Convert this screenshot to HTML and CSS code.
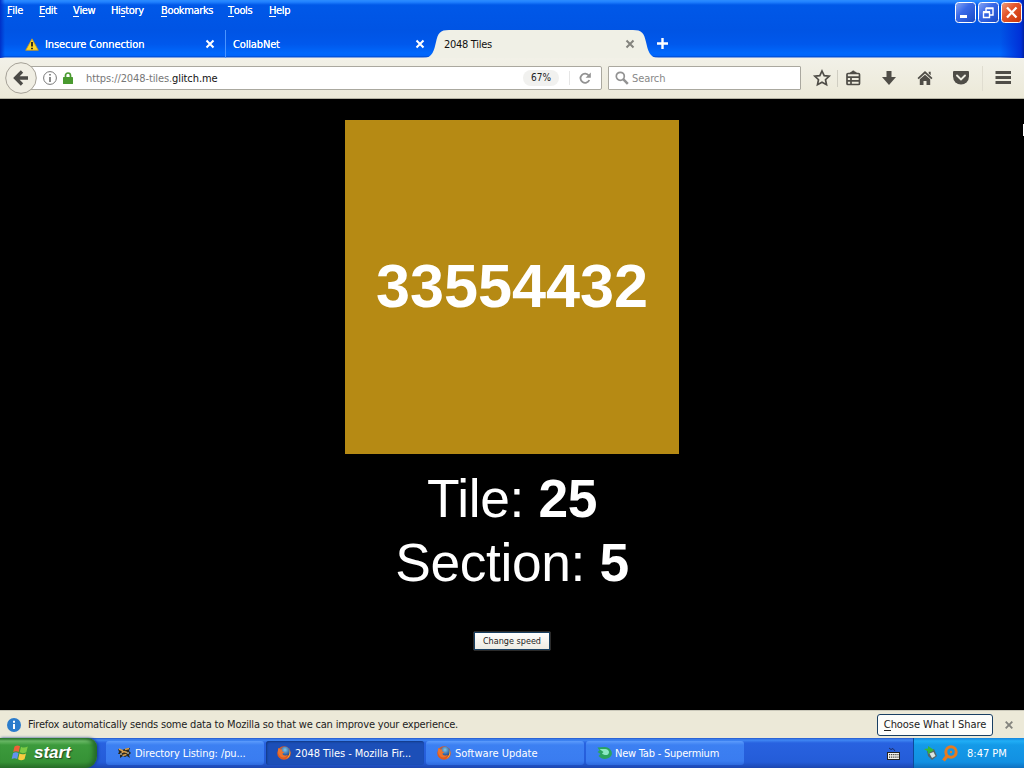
FILE: index.html
```html
<!DOCTYPE html>
<html lang="en">
<head>
<meta charset="utf-8">
<title>2048 Tiles</title>
<link rel="stylesheet" href="styles.css">
</head>
<body>
<div class="screen">
  <header class="titlebar">
    <nav class="menu">
      <span class="m-file"><u>F</u>ile</span><span class="m-edit"><u>E</u>dit</span><span class="m-view"><u>V</u>iew</span><span class="m-history">Hi<u>s</u>tory</span><span class="m-book"><u>B</u>ookmarks</span><span class="m-tools"><u>T</u>ools</span><span><u>H</u>elp</span>
    </nav>
    <div class="winbtns">
      <svg width="68" height="22" viewBox="0 0 68 22">
        <defs>
          <linearGradient id="wb" x1="0" y1="0" x2="1" y2="1"><stop offset="0" stop-color="#8aa8f4"/><stop offset=".4" stop-color="#3a6ae8"/><stop offset="1" stop-color="#1648c4"/></linearGradient>
          <linearGradient id="wr" x1="0" y1="0" x2="1" y2="1"><stop offset="0" stop-color="#f0a080"/><stop offset=".4" stop-color="#e4562c"/><stop offset="1" stop-color="#c83408"/></linearGradient>
        </defs>
        <g stroke="#fff"><rect x=".5" y=".5" width="20" height="20" rx="3" fill="url(#wb)"/><rect x="23.500" y=".5" width="20" height="20" rx="3" fill="url(#wb)"/><rect x="46.500" y=".5" width="20" height="20" rx="3" fill="url(#wr)"/></g>
        <path d="M5 13h7v3H5z" fill="#fff"/>
        <path d="M31 9V6.500h7V13h-3M28.500 10.500h6v5h-6zM28 9.800h7M31 6h7.500" fill="none" stroke="#fff" stroke-width="1.400"/>
        <path d="M52 5.500l9.500 10M61.500 5.500l-9.500 10" stroke="#fff" stroke-width="2.300"/>
      </svg>
    </div>
    <div class="tabs">
      <div class="tab first">
        <svg width="14" height="13" viewBox="0 0 14 13"><path d="M7 .8L13.300 12.300H.7z" fill="#fbd52c" stroke="#c89520" stroke-width=".8" stroke-linejoin="round"/><path d="M7 4v4.500M7 9.700v1.500" stroke="#222" stroke-width="1.800"/></svg>
        <span class="tab-name t-ins">Insecure Connection</span>
        <svg class="x" width="8" height="8" viewBox="0 0 8 8"><path d="M.5.5l7 7M7.500.5l-7 7" stroke="#fff" stroke-width="2"/></svg>
      </div>
      <div class="tab second">
        <span class="tab-name t-col">CollabNet</span>
        <svg class="x" width="8" height="8" viewBox="0 0 8 8"><path d="M.5.5l7 7M7.500.5l-7 7" stroke="#fff" stroke-width="2"/></svg>
      </div>
      <div class="tab active">
        <svg class="tab-shape" width="236" height="28" viewBox="0 0 236 28"><path d="M0 28C10 28 11 20 13 12C15 3 17 0 26 0H210C219 0 221 3 223 12C225 20 226 28 236 28z" fill="#f0f0e6"/></svg>
        <span class="tab-name t-2048">2048 Tiles</span>
        <svg class="x" width="8" height="8" viewBox="0 0 8 8"><path d="M.5.5l7 7M7.500.5l-7 7" stroke="#84847e" stroke-width="2"/></svg>
      </div>
      <svg class="plus" width="11" height="11" viewBox="0 0 11 11"><path d="M5.500 0v11M0 5.500h11" stroke="#fff" stroke-width="2.400"/></svg>
    </div>
  </header>

  <div class="toolbar">
    <div class="back"><svg width="32" height="32" viewBox="0 0 32 32"><circle cx="16" cy="16" r="15.300" fill="#f0eee3" stroke="#a5a197"/><path d="M17 9.500L10.500 16l6.500 6.500M11.500 16H23" fill="none" stroke="#4b4a46" stroke-width="3.300"/></svg></div>
    <div class="urlbar">
      <svg class="info" width="14" height="14" viewBox="0 0 14 14"><circle cx="7" cy="7" r="6.400" fill="none" stroke="#777"/><path d="M7 6v5M7 3v1.600" stroke="#666" stroke-width="1.500"/></svg>
      <svg class="lock" width="10" height="12" viewBox="0 0 10 12"><path d="M2.500 6V3.500a2.500 2.500 0 015 0V6" fill="none" stroke="#4a9a30" stroke-width="1.700"/><rect y="5" width="10" height="7" rx=".6" fill="#4a9a30"/></svg>
      <span class="url">https://2048-tiles.<b>glitch.me</b></span>
      <span class="zoom">67%</span>
      <i class="urlsep"></i>
      <svg class="reload" width="12" height="12" viewBox="0 0 12 12"><path d="M9.800 3.500A4.600 4.600 0 1010.300 8" fill="none" stroke="#929292" stroke-width="1.800"/><path d="M11.800.5v5.200H6.600z" fill="#929292"/></svg>
    </div>
    <div class="search">
      <svg width="14" height="14" viewBox="0 0 14 14"><circle cx="5.300" cy="5.300" r="4" fill="none" stroke="#929292" stroke-width="1.700"/><path d="M8.200 8.200l4.600 4.600" stroke="#929292" stroke-width="2.500"/></svg>
      <span>Search</span>
    </div>
    <svg class="icons" width="214" height="40" viewBox="810 58 214 40" fill="#4f4d47">
      <path d="M822 71l2.200 4.600 5 .6-3.700 3.500 1 5-4.500-2.500-4.500 2.500 1-5-3.700-3.500 5-.6z" fill="none" stroke="#4f4d47" stroke-width="1.700"/>
      <path d="M837.500 70v17" stroke="#d0cec2"/>
      <path d="M848 73.500h10.500a1 1 0 011 1v9a1 1 0 01-1 1H848a1 1 0 01-1-1v-9a1 1 0 011-1zM847 77.200h12M847 80.800h12M851 77v7" fill="none" stroke="#4f4d47" stroke-width="1.700"/><path d="M849.500 73l2-1.500h.4a1.500 1.500 0 012.800 0h.4l2 1.500z"/>
      <path d="M886.500 71h5v6h4.500l-7 8-7-8h4.500z"/>
      <path d="M925 71l7.500 7-1.200 1.300L925 73.600l-6.300 5.700-1.200-1.300zM928.700 71.700h2v3.500l-2-1.800zM919.800 79.300l5.200-4.600 5.200 4.600V85h-3.700v-4h-3v4h-3.700z"/>
      <path d="M954 71h14a1 1 0 011 1v4.500a8 8 0 01-16 0V72a1 1 0 011-1z"/><path d="M957 75.500l4 4 4-4" fill="none" stroke="#eeede2" stroke-width="1.900" stroke-linecap="round"/>
      <path d="M982.500 66v25" stroke="#e0ddd0"/>
      <path d="M995.500 71h15.500v3h-15.500zM995.500 76h15.500v3h-15.500zM995.500 81h15.500v3h-15.500z"/>
    </svg>
  </div>

  <main class="page">
    <div class="tile">33554432</div>
    <div class="caption">Tile: <b>25</b></div>
    <div class="caption">Section: <b>5</b></div>
    <button class="speed"><span>Change speed</span></button>
    <i class="caret"></i>
  </main>

  <div class="notice">
    <svg width="14" height="14" viewBox="0 0 14 14"><circle cx="7" cy="7" r="7" fill="#2b7ccc"/><path d="M7 6v5M7 2.800v2" stroke="#fff" stroke-width="2"/></svg>
    <span class="msg">Firefox automatically sends some data to Mozilla so that we can improve your experience.</span>
    <button class="choose"><span><u>C</u>hoose What I Share</span></button>
    <svg class="close" width="8" height="8" viewBox="0 0 8 8"><path d="M.7.7l6.600 6.600M7.300.7L.7 7.300" stroke="#84847e" stroke-width="1.900"/></svg>
  </div>

  <footer class="taskbar">
    <svg width="0" height="0" class="defs"><defs>
      <radialGradient id="fb" cx=".5" cy=".3" r=".6"><stop offset="0" stop-color="#7cc8ee"/><stop offset="1" stop-color="#1d4a94"/></radialGradient>
      <symbol id="ff" viewBox="0 0 14 14"><circle cx="7" cy="7" r="6.800" fill="#e05a1e"/><circle cx="8" cy="5.800" r="5" fill="url(#fb)"/><path d="M1.500 2l2 1.500 2-.3-.5 2 2.500 1-2 1.300c0 2 3 2.700 5.500 1.200C9.500 12 4 12.500 2 9 .6 6.500.8 4 1.500 2z" fill="#ea7430"/><path d="M12.500 3.500c1.800 4 .2 8-3.500 9.500 2.500-2 4-5 3.500-9.500z" fill="#f6b83c"/></symbol>
    </defs></svg>
    <div class="start">
      <svg width="17" height="18" viewBox="0 0 17 18"><path d="M2.500 2.500Q5.500.5 8 2.300L6.700 8Q4 6.300 1.200 8z" fill="#ee6038"/><path d="M9 2.700q3 1.800 6.800-.2L14.300 8.200Q10.500 10 7.700 8.300z" fill="#7cca44"/><path d="M1 9.200q3-1.700 5.500 0L5.200 15Q2.500 13.300-.3 15z" fill="#6292ee"/><path d="M7.400 9.500q3 1.700 6.600-.1l-1.500 5.900Q9 17.200 6.100 15.300z" fill="#f8cc40"/></svg>
      <span>start</span>
    </div>
    <div class="tasks">
      <div class="task"><svg width="15" height="14" viewBox="0 0 15 14"><path d="M1 3l4 1 3-1 5-1-1 3 2 2-2 2 1 3-3-2-2 1-2-1-3 2 0-4-2 0 1-2z" fill="#292820"/><path d="M2 3l4 2M8 3.500l4-1M4.500 6.500l2.500-1 3 1M5.500 9.500l4-1" stroke="#d8a04c" stroke-width="1.400" fill="none"/><path d="M3 8h2M10 7h2" stroke="#e4e2d0"/></svg><span class="k1">Directory Listing: /pu...</span></div>
      <div class="task on"><svg width="14" height="14"><use href="#ff"/></svg><span class="k2">2048 Tiles - Mozilla Fir...</span></div>
      <div class="task"><svg width="14" height="14"><use href="#ff"/></svg><span class="k3">Software Update</span></div>
      <div class="task"><svg width="15" height="14" viewBox="0 0 15 14"><path d="M.5 1.500L8 1c7 .5 9 8 4.500 10.500-4 2.500-8 1.500-11-1.500l2-2L.5 6l2-1.500z" fill="#2aa45e"/><path d="M2.500 3h6c3.500.5 4.500 3.500 2.500 5.500-2 1-4.500.5-6-1L6.500 6z" fill="#8ae8c4"/></svg><span class="k4">New Tab - Supermium</span></div>
    </div>
    <svg class="kbd" width="14" height="12" viewBox="0 0 14 12"><path d="M2 0l2 1.500 2-1L8 3" stroke="#1b2d66" fill="none"/><rect x=".5" y="4.500" width="12" height="7" fill="#f4f3ee" stroke="#222"/><path d="M2 6.700h9.500M2 9.200h9.500" stroke="#333" stroke-width="1.200" stroke-dasharray="1.200 .9"/></svg>
    <div class="tray">
      <svg width="14" height="16" viewBox="0 0 14 16"><path d="M3 6l7-2 3 7-5 4-4-4z" fill="#56666a"/><path d="M5.500 8.500l4-1.500 2 4-3.500 2z" fill="#dce5e2"/><path d="M0 4l4-.5V1l6 4-6 4V6.500z" fill="#35b63b"/></svg>
      <svg class="key" width="16" height="17" viewBox="0 0 16 17"><circle cx="9" cy="7" r="5.200" fill="none" stroke="#e57b20" stroke-width="3"/><circle cx="9" cy="7" r="1.200" fill="#e57b20"/><path d="M5.500 10.500L1.500 15.500" stroke="#e57b20" stroke-width="3.500"/></svg>
      <span>8:47 PM</span>
    </div>
  </footer>
</div>
</body>
</html>
```
FILE: styles.css
```css
* { box-sizing: border-box; }
body { margin: 0; background: #000; font: 11px/14px "DejaVu Sans Condensed", "DejaVu Sans", sans-serif; font-stretch: condensed; color: #222; }
svg { display: block; flex: none; overflow: visible; }
span { white-space: nowrap; }
u { text-decoration: none; box-shadow: 0 -1px 0 currentColor inset; display: inline-block; height: 13px; line-height: 14px; }
button { font: inherit; color: inherit; padding: 0; }
.screen { width: 1024px; height: 768px; display: flex; flex-direction: column; overflow: hidden; }

.titlebar { height: 58px; flex: none; position: relative; color: #fff; display: flex; flex-direction: column; justify-content: space-between;
  background: linear-gradient(90deg, #0030c8 0, transparent 5px, transparent 1000px, #0030d8 1021px, #0020a0 1024px), linear-gradient(#2c8cff 0, #2080ff 2px, #0058e8 5px, #0054e4 30px, #0058ec 44px, #0068fc 53px, #0064fa 56px, #0044c0 57px, #fff 58px); }
.menu { display: flex; padding: 4px 0 0 7px; height: 20px; letter-spacing: -.35px; text-shadow: 0 0 .5px #fff; }
.menu span { width: 39px; }
.menu .m-file { width: 32px; }
.menu .m-edit { width: 34px; }
.menu .m-view { width: 38px; }
.menu .m-history { width: 50px; }
.menu .m-book { width: 67px; }
.menu .m-tools { width: 41px; }
.winbtns { position: absolute; right: 1px; top: 2px; }
.tabs { display: flex; height: 28px; }
.tab { display: flex; align-items: center; height: 28px; }
.tab-name { flex: 1; padding-top: 1px; }
.t-ins { letter-spacing: -.1px; }
.t-col { letter-spacing: -.15px; }
.t-2048 { letter-spacing: -.3px; }
.first { width: 225px; padding: 0 11px 0 25px; gap: 6px; text-shadow: 0 0 .5px #fff; }
.second { width: 201px; padding: 0 2px 0 7px; border-left: 1px solid #4a94ff; text-shadow: 0 0 .5px #fff; }
.active { width: 236px; margin-left: -3px; position: relative; padding: 0 25px 0 21px; color: #111; }
.tab-shape { position: absolute; left: 0; top: 0; }
.active .tab-name, .active .x { position: relative; }
.plus { margin: 8px 0 0 -2px; }

.toolbar { height: 41px; flex: none; display: flex; align-items: center; padding-left: 5px; background: linear-gradient(#f2f1e8, #ece9d8); border-bottom: 1px solid #b4b2a4; }
.back { width: 32px; position: relative; z-index: 1; }
.urlbar { width: 573px; height: 24px; margin-left: -8px; border: 1px solid #aaa89f; background: #fff; display: flex; align-items: center; border-radius: 0 2px 2px 0; padding: 0 10px 0 13px; }
.lock { margin: 0 13px 0 6px; }
.url { flex: 1; color: #777; letter-spacing: -.1px; padding-top: 1px; }
.url b { font-weight: 400; color: #111; }
.zoom { width: 36px; height: 16px; line-height: 16px; text-align: center; border-radius: 8px; background: #f1f1ef; font-size: 10px; color: #222; }
.urlsep { width: 1px; height: 14px; background: #e6e6e6; margin: 0 9px 0 10px; }
.search { width: 193px; height: 24px; margin-left: 6px; border: 1px solid #aaa89f; border-radius: 1px; background: #fff; display: flex; align-items: center; gap: 3px; padding-left: 6px; color: #888; }
.search span { padding-top: 1px; letter-spacing: -.1px; }
.icons { margin-left: 9px; }

.page { flex: 1; background: #000; position: relative; display: flex; flex-direction: column; align-items: center; padding-top: 21px; font-family: "Liberation Sans", sans-serif; color: #fff; }
.tile { width: 334px; height: 334px; background: #b68a14; font-size: 61.200px; font-weight: bold; line-height: 332px; text-align: center; margin-bottom: 13px; }
.caption { font-size: 53.330px; letter-spacing: -.35px; line-height: 64px; height: 64px; white-space: nowrap; }
.speed { width: 76px; height: 18px; margin-top: 37px; border: 1px solid #173f62; box-shadow: 0 0 1px #fff; background: linear-gradient(#fff, #eceae2); color: #222; font: 9px/14px "DejaVu Sans Condensed", sans-serif; }
.caret { position: absolute; right: 0; top: 25px; width: 1px; height: 12px; background: #fff; }

.notice { height: 28px; flex: none; background: #ece9d8; border-top: 1px solid #c9c7b9; display: flex; align-items: center; padding: 0 11px 0 7px; }
.msg { flex: 1; margin-left: 7px; letter-spacing: -.195px; }
.choose { width: 116px; height: 22px; background: #fdfdfb; border: 1px solid #193f64; border-radius: 3px; margin-right: 12px; letter-spacing: -.05px; }

.taskbar { height: 30px; flex: none; display: flex; align-items: stretch; color: #fff; background: linear-gradient(#2458cc 0, #4088f4 2px, #2862e0 5px, #245cd8 24px, #1c46b0 30px); }
.defs { position: absolute; }
.start { width: 97px; display: flex; align-items: center; padding-left: 12px; gap: 5px; border-radius: 0 9px 12px 0; background: linear-gradient(#2d7a2d 0, #6cbc68 3px, #3c9a3c 7px, #369236 24px, #287028 30px); box-shadow: inset -4px 0 4px #256b28, 1px 0 3px #173a92; }
.start span { font: italic bold 17px/20px "Liberation Sans", sans-serif; text-shadow: 1px 1px 1px #244a20; }
.tasks { display: flex; gap: 2px; padding: 3px 0; margin-left: 9px; }
.task { width: 158px; height: 24px; border-radius: 3px; background: linear-gradient(#5c9cfc 0, #3c80f2 4px, #3a7cf0 20px, #2e6ade 24px); display: flex; align-items: center; gap: 4px; padding-left: 11px; }
.task span { padding-top: 1px; }
.task.on { background: #1c4fb8; box-shadow: inset 1px 1px 2px #123984; }
.task.on span { padding-top: 2px; }
.k1 { letter-spacing: -.1px; margin-left: -1px; }
.k2 { letter-spacing: -.07px; }
.k4 { letter-spacing: -.22px; margin-left: -1px; }
.kbd { margin: 10px 0 0 auto; }
.tray { width: 111px; margin-left: 12px; background: linear-gradient(#1684dc 0, #20aef6 3px, #149ae8 7px, #1290e2 24px, #0e70c0 30px); border-left: 1px solid #0c4a9c; display: flex; align-items: center; padding-left: 10px; }
.tray span { padding-top: 1px; }
.key { margin: 0 9px 0 4px; }
```
